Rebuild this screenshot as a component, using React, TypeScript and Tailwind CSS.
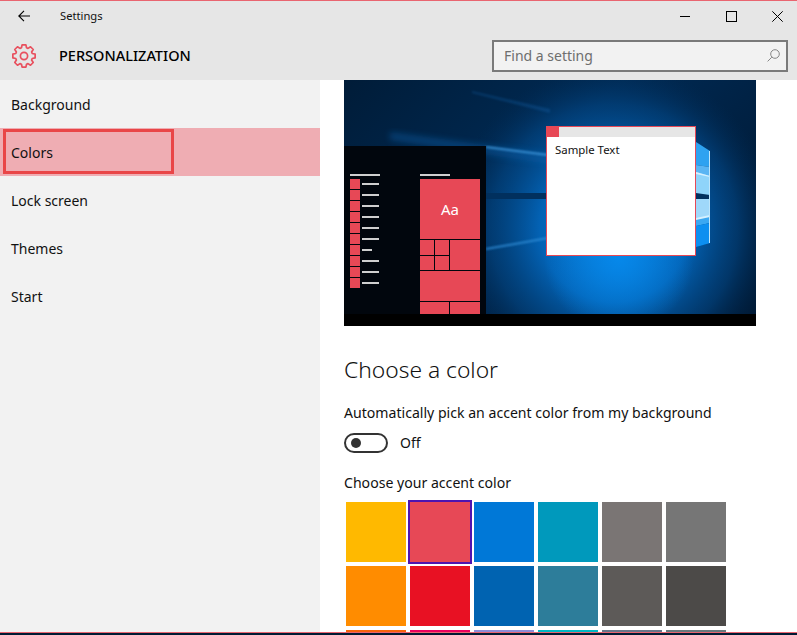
const navItems = ["Background", "Colors", "Lock screen", "Themes", "Start"]

const swatches = [
  "bg-[#ffb900]", "bg-[#e74856]", "bg-[#0078d7]", "bg-[#0099bc]", "bg-[#7a7574]", "bg-[#767676]",
  "bg-[#ff8c00]", "bg-[#e81123]", "bg-[#0063b1]", "bg-[#2d7d9a]", "bg-[#5d5a58]", "bg-[#4c4a48]",
  "bg-[#f7630c]", "bg-[#ea005e]", "bg-[#8e8cd8]", "bg-[#00b7c3]", "bg-[#68768a]", "bg-[#69797e]",
]

// eight chunky teeth, outline only
function gearPath() {
  const pts: string[] = []
  for (let i = 0; i < 8; i++) {
    const a = (i * Math.PI) / 4
    const step = [
      [-0.3, 8.6],
      [-0.17, 11.3],
      [0.17, 11.3],
      [0.3, 8.6],
    ]
    for (const [off, r] of step) {
      pts.push(`${(12 + Math.sin(a + off) * r).toFixed(2)} ${(12 - Math.cos(a + off) * r).toFixed(2)}`)
    }
  }
  return "M" + pts.join("L") + "Z"
}

function Gear() {
  return (
    <svg className="ml-[12px] h-[24px] w-[24px]" viewBox="0 0 24 24" fill="none" stroke="#e8505e" strokeWidth="1.7" strokeLinejoin="round">
      <path d={gearPath()} />
      <circle cx="12" cy="12" r="3.6" />
    </svg>
  )
}

function Wallpaper() {
  return (
    <svg className="absolute inset-0" width="412" height="234" viewBox="0 0 412 234">
      <defs>
        <linearGradient id="base" x1="0" y1="0" x2="1" y2="0.6">
          <stop offset="0" stopColor="#001c38" />
          <stop offset="0.5" stopColor="#002a54" />
          <stop offset="1" stopColor="#001a36" />
        </linearGradient>
        <radialGradient id="glow" cx="270" cy="148" r="165" gradientUnits="userSpaceOnUse">
          <stop offset="0" stopColor="#0a7fdc" />
          <stop offset="0.45" stopColor="#0362b4" />
          <stop offset="0.75" stopColor="#02437f" stopOpacity="0.7" />
          <stop offset="1" stopColor="#012b55" stopOpacity="0" />
        </radialGradient>
        <radialGradient id="under" cx="275" cy="178" r="75" gradientUnits="userSpaceOnUse">
          <stop offset="0" stopColor="#0688ea" />
          <stop offset="1" stopColor="#0688ea" stopOpacity="0" />
        </radialGradient>
        <filter id="soft"><feGaussianBlur stdDeviation="0.9" /></filter>
        <filter id="softer"><feGaussianBlur stdDeviation="3" /></filter>
        <filter id="pane"><feGaussianBlur stdDeviation="0.3" /></filter>
      </defs>
      <rect width="412" height="234" fill="url(#base)" />
      <rect width="412" height="234" fill="url(#glow)" />
      <rect width="412" height="234" fill="url(#under)" />
      <polygon points="128,11 206,29 206,33 128,13" fill="#1466b0" opacity="0.3" filter="url(#soft)" />
      <polygon points="46,52 206,74 206,84 46,60" fill="#0f66b4" opacity="0.4" filter="url(#softer)" />
      <polygon points="142,66 204,74 204,76 142,68" fill="#3f9ce2" opacity="0.85" filter="url(#soft)" />
      <polygon points="142,168 204,157 204,159 142,170" fill="#2f8ed8" opacity="0.85" filter="url(#soft)" />
      <rect x="142" y="113" width="62" height="6" fill="#01305e" />
      <rect x="352" y="113" width="14" height="6" fill="#01305e" />
      <g filter="url(#pane)">
        <polygon points="352,62 366,71 366,87 352,85" fill="#2fa2f0" />
        <polygon points="352,85 366,87 366,97 352,93" fill="#5ab5f3" />
        <polygon points="352,92 366,96 366,115 352,113" fill="#8fd4fa" />
        <polygon points="352,92 366,96 366,97 352,94" fill="#d4f0ff" />
        <polygon points="352,119 366,119 366,136 352,139" fill="#9fd8fa" />
        <polygon points="352,139 366,136 366,143 352,146" fill="#3aa8f2" />
        <polygon points="352,138 366,135 366,137 352,140" fill="#d4f0ff" />
        <polygon points="352,146 366,143 366,163 352,167" fill="#0a8ff0" />
        <rect x="365" y="71" width="1" height="92" fill="#bfe6fb" />
      </g>
    </svg>
  )
}

function StartPanel() {
  const lines = [17, 17, 17, 17, 17, 17, 10, 17, 17, 17]
  return (
    <div className="absolute left-0 top-[66px] flex h-[168px] w-[142px] bg-[#01060d]">
      <div className="ml-[6px] mt-[28px] flex w-[30px] flex-col">
        <div className="mb-[3px] h-[2px] w-[30px] bg-[#cfcfcf]" />
        <div className="flex flex-col gap-px">
          {lines.map((w, i) => (
            <div key={i} className="flex h-[10px] items-center gap-[2px]">
              <div className="h-[10px] w-[10px] bg-[#e74856]" />
              {w === 17 ? <div className="h-[2px] w-[17px] bg-[#cfcfcf]" /> : <div className="h-[2px] w-[10px] bg-[#cfcfcf]" />}
            </div>
          ))}
        </div>
      </div>
      <div className="ml-[40px] mt-[28px] flex w-[60px] flex-col">
        <div className="mb-[3px] h-[2px] w-[30px] bg-[#cfcfcf]" />
        <div className="flex h-[60px] items-center justify-center bg-[#e74856] text-[15px] text-white">Aa</div>
        <div className="mt-px flex h-[30px] gap-px">
          <div className="grid w-[29px] grid-cols-2 grid-rows-2 gap-px">
            <div className="bg-[#e74856]" />
            <div className="bg-[#e74856]" />
            <div className="bg-[#e74856]" />
            <div className="bg-[#e74856]" />
          </div>
          <div className="w-[30px] bg-[#e74856]" />
        </div>
        <div className="mt-px h-[30px] bg-[#e74856]" />
        <div className="mt-px flex h-[12px] gap-px">
          <div className="w-[29px] bg-[#e74856]" />
          <div className="w-[30px] bg-[#e74856]" />
        </div>
      </div>
    </div>
  )
}

function SampleWindow() {
  return (
    <div className="absolute left-[202px] top-[46px] flex h-[130px] w-[150px] flex-col border border-[#e74856] bg-white">
      <div className="flex h-[10px] bg-[#e6e6e6]">
        <div className="-ml-px -mt-px h-[11px] w-[13px] bg-[#e74856]" />
      </div>
      <div className="pl-2 pt-[4px] text-[11.4px] leading-[17px] text-[#111]">Sample Text</div>
    </div>
  )
}

export default function App() {
  return (
    <div className="flex h-[635px] w-[797px] flex-col overflow-hidden bg-white font-['Noto_Sans',sans-serif] text-[#111]">
      <div className="h-px bg-[#e96570]" />
      <div className="bg-[#e6e6e6]">
        <div className="flex h-[30px] items-center">
          <svg className="ml-[18px] h-[12px] w-[12px]" viewBox="0 0 12 12" fill="none" stroke="#000" strokeWidth="1.1">
            <path d="M12 6H0.8M6 0.8L0.8 6L6 11.2" />
          </svg>
          <span className="ml-[30px] text-[11.2px]">Settings</span>
          <div className="ml-auto flex items-center">
            <div className="h-px w-[10px] bg-black" />
            <div className="ml-[36px] h-[11px] w-[11px] border border-black" />
            <svg className="ml-[35px] mr-[14px] h-[11px] w-[11px]" viewBox="0 0 11 11" fill="none" stroke="#000" strokeWidth="1">
              <path d="M0.3 0.3L10.7 10.7M10.7 0.3L0.3 10.7" />
            </svg>
          </div>
        </div>
        <div className="flex h-[49px] items-center">
          <Gear />
          <span className="ml-[23px] text-[14.5px] font-medium text-black">PERSONALIZATION</span>
          <div className="ml-auto mr-[9px] flex h-[32px] w-[296px] items-center border-2 border-[#7a7a7a] bg-[#f2f2f2] pl-[10px] pr-[6px]">
            <span className="text-[14px] text-[#6e6e6e]">Find a setting</span>
            <svg className="ml-auto h-[13px] w-[13px]" viewBox="0 0 13 13" fill="none" stroke="#858585" strokeWidth="1">
              <circle cx="8" cy="5" r="4.3" />
              <path d="M4.8 8.2L0.6 12.4" />
            </svg>
          </div>
        </div>
      </div>
      <div className="flex min-h-0 flex-1">
        <nav className="w-[320px] bg-[#f2f2f2]">
          {navItems.map((item) =>
            item === "Colors" ? (
              <div key={item} className="h-[48px] bg-[#efadb3] pl-[3px] pt-px">
                <div className="flex h-[45px] w-[171px] items-center border-[3px] border-[#e94648] pl-[5px] pt-[2px] text-[14px]">{item}</div>
              </div>
            ) : (
              <div key={item} className="flex h-[48px] items-center pl-[11px] text-[14px]">{item}</div>
            )
          )}
        </nav>
        <main className="min-h-0 flex-1 overflow-hidden pl-[24px]">
          <div className="h-[246px] w-[412px] bg-black">
            <div className="relative h-[234px] overflow-hidden">
              <Wallpaper />
              <StartPanel />
              <SampleWindow />
            </div>
          </div>
          <h2 className="mt-[26px] text-[22.8px] font-light leading-[36px]">Choose a color</h2>
          <p className="mt-[15px] text-[14.1px] leading-[20px]">Automatically pick an accent color from my background</p>
          <div className="mt-[9px] flex items-center">
            <div className="flex h-[20px] w-[44px] items-center rounded-full border-2 border-[#333] pl-[5px]">
              <div className="h-[10px] w-[10px] rounded-full bg-[#333]" />
            </div>
            <span className="ml-[12px] text-[14px]">Off</span>
          </div>
          <p className="mt-[20px] text-[14.1px] leading-[20px]">Choose your accent color</p>
          <div className="ml-[2px] mt-[9px] grid auto-rows-[60px] grid-cols-[repeat(6,60px)] gap-[4px]">
            {swatches.map((c, i) => (
              <div key={i} className={c + (i === 1 ? " outline-2 outline-[#4f14b0]" : "")} />
            ))}
          </div>
        </main>
      </div>
      <div className="h-px bg-[#e96570]" />
      <div className="h-[2px] bg-[#001a33]" />
    </div>
  )
}
